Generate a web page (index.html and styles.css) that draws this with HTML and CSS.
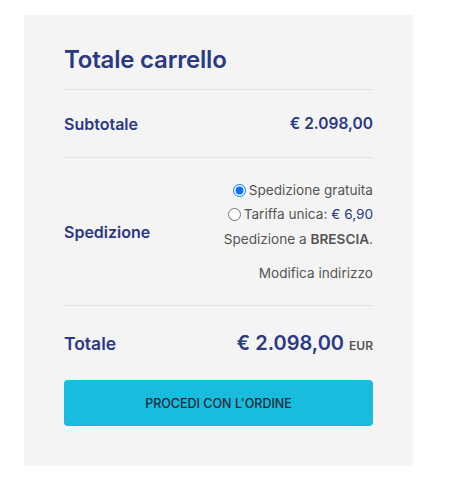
FILE: index.html
```html
<!DOCTYPE html>
<html lang="it">
<head>
  <meta charset="UTF-8" />
  <title>Totale carrello</title>
  <link rel="stylesheet" href="styles.css">
</head>
<body>
  <div class="cart-totals">
    <h2>Totale carrello</h2>
    <div class="row">
      <span class="label">Subtotale</span>
      <span class="amount">€ 2.098,00</span>
    </div>
    <div class="row shipping">
      <span class="label">Spedizione</span>
      <div class="methods">
        <label><input type="radio" name="ship" checked>Spedizione gratuita</label>
        <label><input type="radio" name="ship">Tariffa unica: <span class="price">€ 6,90</span></label>
        <p class="dest">Spedizione a <strong>BRESCIA</strong>.</p>
        <p class="change">Modifica indirizzo</p>
      </div>
    </div>
    <div class="row total">
      <span class="label">Totale</span>
      <span class="amount big">€ 2.098,00 <small>EUR</small></span>
    </div>
    <button type="button">PROCEDI CON L'ORDINE</button>
  </div>
</body>
</html>
```

FILE: styles.css
```css
body { margin: 0; background: #fff; font-family: "Inter", "Roboto", sans-serif; }
.cart-totals { width: 309px; margin: 15px 0 0 24px; padding: 30px 40px 40px; background: #f4f4f4; }
h2 { margin: 0; font-size: 24px; font-weight: 600; color: #2a3886; line-height: 30px; padding-bottom: 14px; border-bottom: 1px solid #e2e2e2; letter-spacing: -0.2px; }
.row { display: flex; justify-content: space-between; align-items: center; border-bottom: 1px solid #e2e2e2; }
.row:nth-of-type(1) { height: 67px; }
.label { font-size: 16px; font-weight: 600; color: #2a3886; }
.amount { font-size: 15.5px; font-weight: 600; color: #2a3886; }
.shipping { padding: 20px 0 20px; }
.methods { display: flex; flex-direction: column; align-items: flex-end; font-size: 13.6px; color: #555; }
.methods label { display: flex; align-items: center; height: 24px; }
.methods input { margin: 0 3px 0 0; width: 13px; height: 13px; }
.price { color: #2a3886; margin-left: 4px; }
.dest { margin: 1px 0 0; line-height: 24px; }
.dest strong { font-weight: 600; }
.change { margin: 10px 0 0; line-height: 24px; }
.total { border-bottom: none; height: 74px; }
.total .label { font-size: 17.5px; }
.big { font-size: 20px; }
.big small { font-size: 12px; color: #555; }
button { display: block; width: 100%; height: 46px; margin-top: 0; border: none; border-radius: 4px; background: #19bcdc; color: #1d2b3a; font-family: inherit; font-size: 12.5px; font-weight: 500; }
```
